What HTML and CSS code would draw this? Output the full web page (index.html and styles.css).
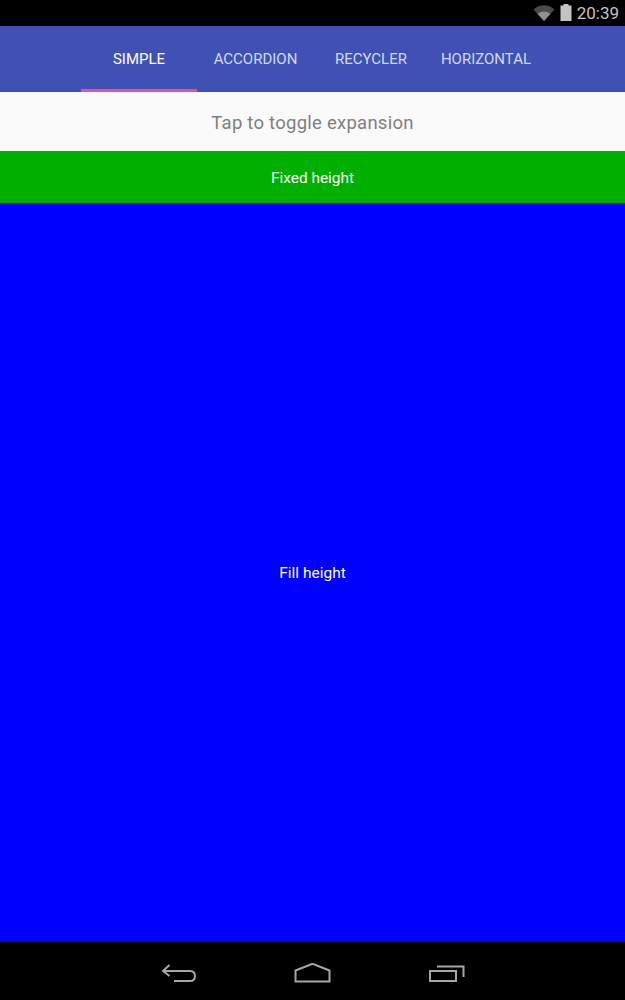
FILE: index.html
```html
<!DOCTYPE html>
<html lang="en">
<head>
<meta charset="utf-8">
<title>Expandable layout</title>
<link rel="stylesheet" href="styles.css">
</head>
<body>
<div class="screen">
  <header class="status">
    <svg class="wifi" width="22" height="16" viewBox="0 0 22 16">
      <path d="M0.5 4.5 A15 15 0 0 1 21.5 4.5 L11 16 Z" fill="#4a4a4a"/>
      <path d="M4.6 9 A9.5 9.5 0 0 1 17.4 9 L11 16 Z" fill="#8f8f8f"/>
    </svg>
    <svg class="battery" width="12" height="17" viewBox="0 0 12 17">
      <path d="M3.5 0 H8.5 V1.5 H11.5 V17 H0.5 V1.5 H3.5 Z" fill="#c4c4c4"/>
    </svg>
    <span class="clock">20:39</span>
  </header>
  <nav class="tabs">
    <div class="tab tab-simple active">SIMPLE</div>
    <div class="tab tab-accordion">ACCORDION</div>
    <div class="tab tab-recycler">RECYCLER</div>
    <div class="tab tab-horizontal">HORIZONTAL</div>
  </nav>
  <div class="toggle">Tap to toggle expansion</div>
  <div class="fixed">Fixed height</div>
  <main class="fill">Fill height</main>
  <footer class="navbar">
    <svg width="36" height="20" viewBox="0 0 36 20" fill="none" stroke="#a6a6a6" stroke-width="2">
      <path d="M8.5 2 L2 8 L8.5 13"/>
      <path d="M2 8 H29 Q34 8 34 13 Q34 18 29 18 H13"/>
    </svg>
    <svg width="38" height="20" viewBox="0 0 38 20" fill="none" stroke="#a6a6a6" stroke-width="2">
      <path d="M1.5 7.5 L18.5 0.8 L35.5 7.5 V18.5 H1.5 Z"/>
    </svg>
    <svg width="36" height="20" viewBox="0 0 36 20" fill="none" stroke="#a6a6a6" stroke-width="2">
      <rect x="1" y="8" width="26" height="10"/>
      <path d="M8 3.5 H34.5 V14"/>
    </svg>
  </footer>
</div>
</body>
</html>
```
FILE: styles.css
```css
* { box-sizing: border-box; }
html, body { margin: 0; padding: 0; }
body { background: #000; font-family: Roboto, "Liberation Sans", sans-serif; }
.screen { width: 625px; height: 1000px; display: flex; flex-direction: column; overflow: hidden; }
.status { height: 26px; background: #000; display: flex; align-items: center; justify-content: flex-end; padding-right: 6px; }
.wifi { margin-right: 5px; }
.battery { margin-right: 5px; margin-bottom: 1px; }
.clock { color: #c4c4c4; font-size: 17px; }
.tabs { height: 66px; background: #3f51b5; display: flex; padding-left: 81px; }
.tab { height: 66px; padding-top: 3px; display: flex; align-items: center; justify-content: center; font-size: 15px; font-weight: 400; color: #d3d9f2; border-bottom: 3px solid transparent; }
.tab-simple { width: 116px; }
.tab-accordion { width: 117px; }
.tab-recycler { width: 114px; }
.tab-horizontal { width: 116px; }
.tab.active { color: #fff; border-bottom-color: #ec4f9a; }
.toggle { height: 59px; padding-top: 2px; background: #fafafa; color: #808080; display: flex; align-items: center; justify-content: center; font-size: 18.5px; letter-spacing: .25px; }
.fixed { height: 52px; padding-top: 1px; background: #00b000; color: #fff; display: flex; align-items: center; justify-content: center; font-size: 15.4px; }
.fill { height: 739px; background: #0000ff; color: #fff; display: flex; align-items: center; justify-content: center; font-size: 15.5px; }
.navbar { flex: 1; background: #000; display: flex; align-items: center; justify-content: center; gap: 97px; padding-top: 3px; }
```
